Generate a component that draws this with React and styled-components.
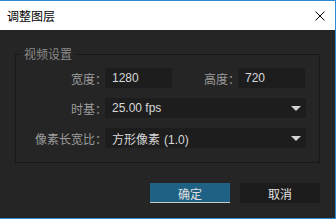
import React from "react";
import styled, { createGlobalStyle } from "styled-components";

const Global = createGlobalStyle`
  html, body { margin: 0; padding: 0; background: #252525; }
  * { box-sizing: border-box; }
  body { font-family: "Noto Sans CJK SC", "Liberation Sans", sans-serif; font-size: 12px; }
`;

const Window = styled.div`
  width: 336px;
  height: 219px;
  border-top: 1px solid #2f8ad6;
  border-right: 1px solid #2f8ad6;
  border-bottom: 1px solid #2f8ad6;
  background: #252525;
  display: flex;
  flex-direction: column;
`;

const TitleBar = styled.div`
  height: 29px;
  flex: none;
  background: #ffffff;
  display: flex;
  align-items: center;
  justify-content: space-between;
  padding: 0 10px 0 7px;
  color: #000;
  font-size: 12px;
`;

const Close = styled.svg`
  width: 10px;
  height: 10px;
  display: block;
`;

const Body = styled.div`
  flex: 1;
  display: flex;
  flex-direction: column;
  padding: 17px 15px 15px 15px;
`;

const Group = styled.fieldset`
  margin: 0;
  padding: 7px 13px 14px 0;
  border: 1px solid #181818;
  display: flex;
  flex-direction: column;
  gap: 10px;
`;

const Legend = styled.legend`
  margin-left: 5px;
  padding: 0 3px;
  color: #8a8a8a;
  font-size: 12px;
  line-height: 14px;
`;

const Row = styled.div`
  display: flex;
  align-items: center;
  height: 20px;
`;

const Label = styled.div`
  width: ${p => p.$w}px;
  flex: none;
  text-align: right;
  color: #9c9c9c;
  font-size: 12px;
  white-space: nowrap;
  margin-right: -2px;
`;

const Field = styled.div`
  width: ${p => (p.$w ? `${p.$w}px` : "auto")};
  flex: ${p => (p.$w ? "none" : "1")};
  height: 20px;
  background: #1d1d1d;
  color: #d8d8d8;
  font-family: "Liberation Sans", "Noto Sans CJK SC", sans-serif;
  font-size: 12px;
  display: flex;
  align-items: center;
  justify-content: space-between;
  padding: 0 5px 0 7px;
`;

const Cjk = styled.span`
  font-family: "Noto Sans CJK SC", sans-serif;
  margin-right: 4px;
`;

const Arrow = styled.span`
  width: 0;
  height: 0;
  border-left: 5px solid transparent;
  border-right: 5px solid transparent;
  border-top: 5px solid #d4d4d4;
`;

const Footer = styled.div`
  margin-top: auto;
  display: flex;
  justify-content: flex-end;
  gap: 10px;
`;

const Button = styled.button`
  width: 80px;
  height: 20px;
  border: none;
  margin: 0;
  padding: 0;
  font-family: "Noto Sans CJK SC", sans-serif;
  font-size: 12px;
  color: #e0e0e0;
  background: ${p => (p.$primary ? "#1f6184" : "#1c1c1c")};
  box-shadow: ${p => (p.$primary ? "inset 0 -1px 0 #c8c8c8" : "none")};
`;

export default function App() {
  return (
    <>
      <Global />
      <Window>
        <TitleBar>
          <span>调整图层</span>
          <Close viewBox="0 0 10 10">
            <path d="M0.5 0.5 L9.5 9.5 M9.5 0.5 L0.5 9.5" stroke="#000" strokeWidth="1" fill="none" />
          </Close>
        </TitleBar>
        <Body>
          <Group>
            <Legend>视频设置</Legend>
            <Row>
              <Label $w={91}>宽度：</Label>
              <Field $w={67}>1280</Field>
              <Label $w={68}>高度：</Label>
              <Field $w={67}>720</Field>
            </Row>
            <Row>
              <Label $w={91}>时基：</Label>
              <Field>
                <span>25.00 fps</span>
                <Arrow />
              </Field>
            </Row>
            <Row>
              <Label $w={91}>像素长宽比：</Label>
              <Field>
                <span><Cjk>方形像素</Cjk>(1.0)</span>
                <Arrow />
              </Field>
            </Row>
          </Group>
          <Footer>
            <Button $primary>确定</Button>
            <Button>取消</Button>
          </Footer>
        </Body>
      </Window>
    </>
  );
}
